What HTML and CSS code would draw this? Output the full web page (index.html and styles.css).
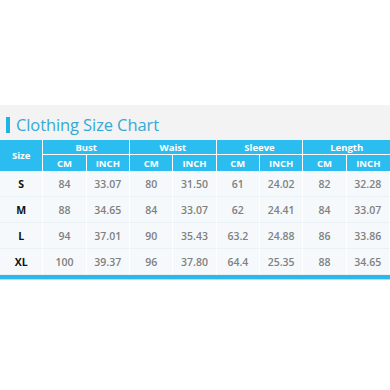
FILE: index.html
```html
<!DOCTYPE html>
<html>
<head>
<meta charset="utf-8">
<link rel="stylesheet" href="styles.css">
</head>
<body>
<div class="page">
  <div class="title-band">
    <span class="title-mark"></span>
    <h1 class="title">Clothing Size Chart</h1>
  </div>
  <div class="chart">
    <div class="hd size-hd">Size</div>
    <div class="hd grp">Bust</div>
    <div class="hd grp">Waist</div>
    <div class="hd grp">Sleeve</div>
    <div class="hd grp">Length</div>
    <div class="hd sub">CM</div><div class="hd sub">INCH</div>
    <div class="hd sub">CM</div><div class="hd sub">INCH</div>
    <div class="hd sub">CM</div><div class="hd sub">INCH</div>
    <div class="hd sub">CM</div><div class="hd sub">INCH</div>

    <div class="cell sz">S</div><div class="cell">84</div><div class="cell">33.07</div><div class="cell">80</div><div class="cell">31.50</div><div class="cell">61</div><div class="cell">24.02</div><div class="cell">82</div><div class="cell">32.28</div>
    <div class="cell sz">M</div><div class="cell">88</div><div class="cell">34.65</div><div class="cell">84</div><div class="cell">33.07</div><div class="cell">62</div><div class="cell">24.41</div><div class="cell">84</div><div class="cell">33.07</div>
    <div class="cell sz">L</div><div class="cell">94</div><div class="cell">37.01</div><div class="cell">90</div><div class="cell">35.43</div><div class="cell">63.2</div><div class="cell">24.88</div><div class="cell">86</div><div class="cell">33.86</div>
    <div class="cell sz">XL</div><div class="cell">100</div><div class="cell">39.37</div><div class="cell">96</div><div class="cell">37.80</div><div class="cell">64.4</div><div class="cell">25.35</div><div class="cell">88</div><div class="cell">34.65</div>
  </div>
  <div class="bottom-bar"></div>
</div>
</body>
</html>
```

FILE: styles.css
```css
html, body {
  margin: 0;
  padding: 0;
  background: #ffffff;
}
.page {
  width: 390px;
  height: 390px;
  padding-top: 105px;
  box-sizing: border-box;
  font-family: "Open Sans", "Noto Sans", sans-serif;
}
.title-band {
  height: 35px;
  background: #f3f3f3;
  display: flex;
  align-items: center;
  gap: 6px;
  padding-left: 6px;
  padding-top: 4px;
  box-sizing: border-box;
}
.title-mark {
  width: 4px;
  height: 16px;
  background: #20b3e6;
}
.title {
  margin: 0;
  font-size: 16.5px;
  font-weight: 400;
  color: #35a9d6;
  letter-spacing: -0.1px;
}
.chart {
  display: grid;
  grid-template-columns: repeat(9, 1fr);
  grid-template-rows: 15px 16px repeat(4, 26px);
  background: #f5f9fc;
}
.hd {
  background: #2bbdf0;
  color: #ffffff;
  font-weight: 700;
  font-size: 9.5px;
  display: flex;
  align-items: center;
  justify-content: center;
  border-right: 1px solid #ffffff;
  box-sizing: border-box;
}
.hd:nth-child(5) { border-right: none; }
.hd.sub:nth-child(13) { border-right: none; }
.size-hd {
  grid-row: span 2;
}
.grp {
  grid-column: span 2;
  border-bottom: 1px solid #ffffff;
}
.cell {
  display: flex;
  align-items: center;
  justify-content: center;
  font-size: 10.5px;
  font-weight: 600;
  color: #808080;
  border-right: 1px solid #ffffff;
  border-bottom: 1px solid #eaf1f5;
  box-sizing: border-box;
}
.cell.sz {
  color: #111111;
  font-weight: 700;
}
.bottom-bar {
  height: 4px;
  background: #2bb8ec;
  box-shadow: 0 1px 0 #a8e2f7;
}
```
